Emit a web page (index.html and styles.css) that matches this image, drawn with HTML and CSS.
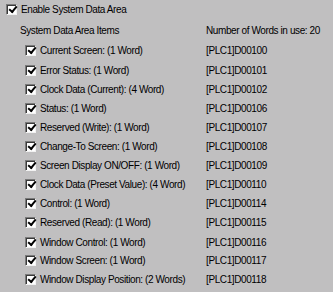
FILE: index.html
```html
<!DOCTYPE html>
<html lang="en">
<head>
    <meta charset="UTF-8">
    <title>System Data Area</title>
    <link rel="stylesheet" href="styles.css">
</head>
<body>
    <div class="panel">
        <label class="enable">
            <span class="check"></span>
            <span>Enable System Data Area</span>
        </label>
        <div class="head">
            <span class="head-title">System Data Area Items</span>
            <span class="addr">Number of Words in use: 20</span>
        </div>
        <ul class="items">
            <li class="item"><span class="check"></span><span class="name">Current Screen: (1 Word)</span><span class="addr">[PLC1]D00100</span></li>
            <li class="item"><span class="check"></span><span class="name">Error Status: (1 Word)</span><span class="addr">[PLC1]D00101</span></li>
            <li class="item"><span class="check"></span><span class="name">Clock Data (Current): (4 Word)</span><span class="addr">[PLC1]D00102</span></li>
            <li class="item"><span class="check"></span><span class="name">Status: (1 Word)</span><span class="addr">[PLC1]D00106</span></li>
            <li class="item"><span class="check"></span><span class="name">Reserved (Write): (1 Word)</span><span class="addr">[PLC1]D00107</span></li>
            <li class="item"><span class="check"></span><span class="name">Change-To Screen: (1 Word)</span><span class="addr">[PLC1]D00108</span></li>
            <li class="item"><span class="check"></span><span class="name">Screen Display ON/OFF: (1 Word)</span><span class="addr">[PLC1]D00109</span></li>
            <li class="item"><span class="check"></span><span class="name">Clock Data (Preset Value): (4 Word)</span><span class="addr">[PLC1]D00110</span></li>
            <li class="item"><span class="check"></span><span class="name">Control: (1 Word)</span><span class="addr">[PLC1]D00114</span></li>
            <li class="item"><span class="check"></span><span class="name">Reserved (Read): (1 Word)</span><span class="addr">[PLC1]D00115</span></li>
            <li class="item"><span class="check"></span><span class="name">Window Control: (1 Word)</span><span class="addr">[PLC1]D00116</span></li>
            <li class="item"><span class="check"></span><span class="name">Window Screen: (1 Word)</span><span class="addr">[PLC1]D00117</span></li>
            <li class="item"><span class="check"></span><span class="name">Window Display Position: (2 Words)</span><span class="addr">[PLC1]D00118</span></li>
        </ul>
    </div>
</body>
</html>
```

FILE: styles.css
```css
* {
    margin: 0;
    padding: 0;
    box-sizing: border-box;
}

body {
    font-family: "Liberation Sans", Arial, sans-serif;
    font-size: 10px;
    letter-spacing: -0.4px;
    background-color: #c0bfc0;
    color: #000;
    width: 333px;
    height: 292px;
    overflow: hidden;
}

.panel {
    padding-top: 3px;
}

.enable {
    display: flex;
    align-items: center;
    gap: 4px;
    height: 12px;
    padding-left: 6px;
}

.head {
    display: flex;
    align-items: center;
    height: 12px;
    margin-top: 9px;
    padding-left: 20px;
}

.head-title {
    width: 186px;
}

.items {
    list-style: none;
    margin-top: 5px;
}

.item {
    display: flex;
    align-items: center;
    height: 19px;
    padding-left: 25px;
}

/* the dialog rows are not evenly spaced */
.item:nth-child(2) {
    margin-top: 1px;
}

.item:nth-child(11) {
    margin-top: 2px;
    height: 17px;
}

.item .check {
    margin-right: 4px;
}

.name {
    width: 166px;
    white-space: nowrap;
}

.addr {
    white-space: nowrap;
}

.check {
    position: relative;
    flex-shrink: 0;
    width: 11px;
    height: 11px;
    background-color: #fff;
    border-top: 1px solid #7a7a7a;
    border-left: 1px solid #7a7a7a;
    border-right: 1px solid #f2f2f2;
    border-bottom: 1px solid #f2f2f2;
    box-shadow: inset 1px 1px 0 #3a3a3a;
}

.check::after {
    content: "";
    position: absolute;
    left: 2px;
    top: 1px;
    width: 6px;
    height: 3px;
    border-left: 2px solid #000;
    border-bottom: 2px solid #000;
    transform: rotate(-50deg);
}
```
